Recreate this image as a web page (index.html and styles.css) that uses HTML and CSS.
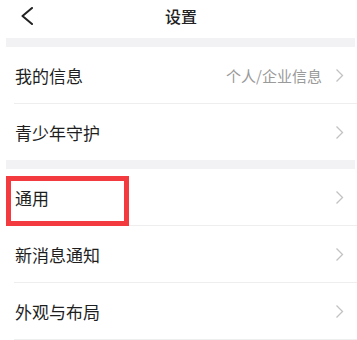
FILE: index.html
```html
<!DOCTYPE html>
<html lang="zh-CN">
<head>
    <meta charset="UTF-8">
    <meta name="viewport" content="width=device-width, initial-scale=1.0">
    <title>设置</title>
    <link rel="stylesheet" href="styles.css">
</head>
<body>

<div class="page">
    <div class="header">
        <span class="back">
            <svg width="14" height="18" viewBox="0 0 14 18">
                <path d="M12 1 L2.5 9 L12 17" fill="none" stroke="#222" stroke-width="2" stroke-linecap="round" stroke-linejoin="round"/>
            </svg>
        </span>
        <h3>设置</h3>
        <span></span>
    </div>

    <div class="band"></div>
    <div class="group">
        <div class="row">
            <span class="label">我的信息</span>
            <span class="extra">个人/企业信息</span>
            <svg class="chevron" width="9" height="15" viewBox="0 0 9 15">
                <path d="M1.5 1.5 L7.5 7.5 L1.5 13.5" fill="none" stroke="#c2c2c2" stroke-width="1.3"/>
            </svg>
        </div>
        <div class="row">
            <span class="label">青少年守护</span>
            <svg class="chevron" width="9" height="15" viewBox="0 0 9 15">
                <path d="M1.5 1.5 L7.5 7.5 L1.5 13.5" fill="none" stroke="#c2c2c2" stroke-width="1.3"/>
            </svg>
        </div>
    </div>

    <div class="band"></div>
    <div class="group">
        <div class="row">
            <span class="label">通用</span>
            <svg class="chevron" width="9" height="15" viewBox="0 0 9 15">
                <path d="M1.5 1.5 L7.5 7.5 L1.5 13.5" fill="none" stroke="#c2c2c2" stroke-width="1.3"/>
            </svg>
            <div class="highlight"></div>
        </div>
        <div class="row">
            <span class="label">新消息通知</span>
            <svg class="chevron" width="9" height="15" viewBox="0 0 9 15">
                <path d="M1.5 1.5 L7.5 7.5 L1.5 13.5" fill="none" stroke="#c2c2c2" stroke-width="1.3"/>
            </svg>
        </div>
        <div class="row last-bordered">
            <span class="label">外观与布局</span>
            <svg class="chevron" width="9" height="15" viewBox="0 0 9 15">
                <path d="M1.5 1.5 L7.5 7.5 L1.5 13.5" fill="none" stroke="#c2c2c2" stroke-width="1.3"/>
            </svg>
        </div>
    </div>
</div>

</body>
</html>
```

FILE: styles.css
```css
body {
    margin: 0;
    padding: 0;
    background: #fff;
    font-family: "Noto Sans CJK SC", "Noto Sans", sans-serif;
    color: #222;
}

.page {
    width: 357px;
    overflow: hidden;
}

.header {
    height: 31px;
    padding: 0 0 7px 5px;
    display: grid;
    grid-template-columns: 1fr auto 1fr;
    align-items: center;
}

.back {
    padding-left: 15px;
    display: flex;
    align-items: center;
}

h3 {
    margin: 0;
    font-size: 16px;
    font-weight: 500;
    line-height: 1;
    color: #222;
}

.band {
    height: 9px;
    margin: 0 2px 0 6px;
    background-color: #f2f2f4;
}

.row {
    position: relative;
    height: 56px;
    margin-left: 14px;
    padding: 0 13px 0 1px;
    display: flex;
    align-items: center;
    border-bottom: 1px solid #eeeeee;
}

.group .row:last-child {
    border-bottom: none;
}

.group .row.last-bordered {
    border-bottom: 1px solid #eeeeee;
}

.label {
    flex: 1;
    font-size: 17px;
    line-height: 1;
    color: #1e1e1e;
}

.extra {
    font-size: 15px;
    line-height: 1;
    color: #9a9a9a;
    margin-right: 13px;
}

.chevron {
    display: block;
}

/* red annotation frame */
.highlight {
    position: absolute;
    left: -8px;
    top: 7px;
    width: 113px;
    height: 40px;
    border: 5px solid #f23a3f;
}
```
